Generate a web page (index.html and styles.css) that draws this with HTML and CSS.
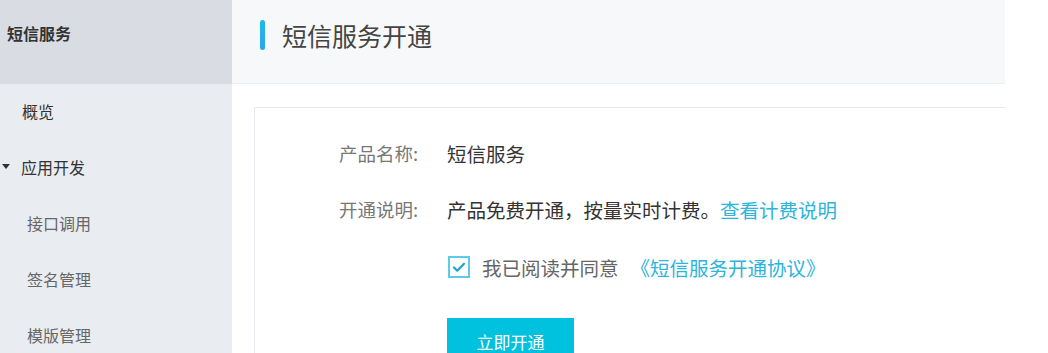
FILE: index.html
```html
<!DOCTYPE html>
<html lang="zh-CN">
<head>
  <meta charset="UTF-8">
  <meta name="viewport" content="width=device-width, initial-scale=1.0">
  <title>短信服务开通</title>
  <link rel="stylesheet" href="styles.css">
</head>
<body>
  <div class="layout">
    <!-- left nav -->
    <aside class="sidebar">
      <div class="sidebar-head">短信服务</div>
      <div class="nav-item">概览</div>
      <div class="nav-item nav-group"><span class="caret"></span>应用开发</div>
      <div class="nav-item nav-sub">接口调用</div>
      <div class="nav-item nav-sub">签名管理</div>
      <div class="nav-item nav-sub">模版管理</div>
    </aside>

    <main class="main">
      <div class="page-head">
        <span class="head-bar"></span>
        <h1 class="page-title">短信服务开通</h1>
      </div>
      <div class="card">
        <div class="form-row">
          <span class="form-label">产品名称:</span>
          <span class="form-value">短信服务</span>
        </div>
        <div class="form-row">
          <span class="form-label">开通说明:</span>
          <span class="form-value">产品免费开通，按量实时计费。<a class="link" href="#">查看计费说明</a></span>
        </div>
        <div class="form-row agree-row">
          <span class="form-label"></span>
          <label class="agree">
            <span class="checkbox">
              <svg viewBox="0 0 16 16" width="16" height="16"><path d="M3 8.5l3.3 3.2L13 4.8" fill="none" stroke="#1aa3d6" stroke-width="2.2" stroke-linecap="round" stroke-linejoin="round"/></svg>
            </span>
            <span class="agree-text">我已阅读并同意</span>
            <a class="link agree-link" href="#">《短信服务开通协议》</a>
          </label>
        </div>
        <div class="form-row btn-row">
          <span class="form-label"></span>
          <button class="btn-primary">立即开通</button>
        </div>
      </div>
    </main>
  </div>
</body>
</html>
```

FILE: styles.css
```css
/* Base */
html, body {
  margin: 0;
  padding: 0;
  background: #ffffff;
  font-family: "Noto Sans CJK SC", "Noto Sans", sans-serif;
  color: #333333;
  overflow: hidden;
}

.layout {
  display: flex;
  height: 353px;
  overflow: hidden;
}

/* Sidebar */
.sidebar {
  width: 232px;
  flex: none;
  background: #e9ecf0;
}
.sidebar-head {
  height: 84px;
  box-sizing: border-box;
  padding: 20px 0 0 7px;
  background: #d9dde3;
  font-size: 16px;
  font-weight: bold;
  line-height: 26px;
  color: #333333;
}
.nav-item {
  height: 56px;
  box-sizing: border-box;
  padding-bottom: 3px;
  display: flex;
  align-items: center;
  padding-left: 22px;
  font-size: 16px;
  color: #333333;
}
.nav-group {
  padding-left: 2px;
}
.caret {
  width: 0;
  height: 0;
  border-left: 4px solid transparent;
  border-right: 4px solid transparent;
  border-top: 5px solid #333333;
  margin-right: 11px;
}
.nav-sub {
  padding-left: 27px;
  color: #666666;
}

/* Main */
.main {
  width: 773px;
  flex: none;
}
.page-head {
  height: 84px;
  box-sizing: border-box;
  display: flex;
  align-items: flex-start;
  padding: 20px 0 0 28px;
  background: #f7f8fa;
  border-bottom: 1px solid #eceef1;
}
.head-bar {
  width: 5px;
  height: 30px;
  border-radius: 3px;
  background: linear-gradient(#1fb9ea, #2aa6e8);
  margin-right: 17px;
}
.page-title {
  margin: 0;
  font-size: 25px;
  font-weight: normal;
  line-height: 30px;
  color: #444444;
}

.card {
  box-sizing: border-box;
  height: 246px;
  overflow: hidden;
  display: flex;
  flex-direction: column;
  margin: 23px 0 0 22px;
  border: 1px solid #e6e9ee;
  border-right: none;
  border-bottom: none;
  padding: 28px 0 0 84px;
}
.form-row {
  display: flex;
  align-items: center;
  flex: none;
  height: 34px;
  margin-bottom: 22px;
}
.form-label {
  width: 108px;
  flex: none;
  font-size: 18.5px;
  color: #777777;
}
.form-value {
  font-size: 19.5px;
  color: #333333;
}
.link {
  color: #2bb4dc;
  text-decoration: none;
}

.agree-row {
  margin-top: 2px;
}
.agree {
  display: flex;
  align-items: center;
}
.checkbox {
  width: 22px;
  height: 22px;
  box-sizing: border-box;
  border: 2px solid #5ccbe8;
  background: #ffffff;
  display: flex;
  align-items: center;
  justify-content: center;
  margin-left: 1px;
  margin-right: 12px;
}
.agree-text {
  font-size: 19.5px;
  color: #666666;
}
.agree-link {
  font-size: 19.5px;
  margin-left: 12px;
}

.btn-row {
  margin-top: 12px;
  align-items: flex-start;
}
.btn-primary {
  width: 127px;
  height: 48px;
  flex: none;
  border: none;
  background: #00c1de;
  color: #ffffff;
  font-family: inherit;
  font-size: 17px;
  line-height: 24px;
  padding: 0;
}
```
